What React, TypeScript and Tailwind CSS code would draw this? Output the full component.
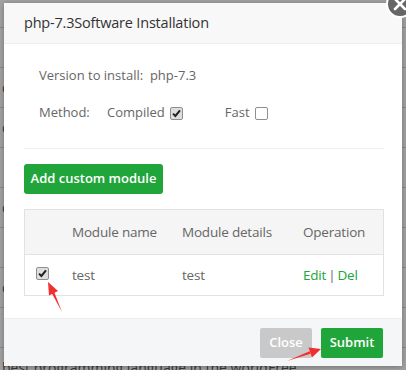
import { ReactNode } from "react";

const bgRows = [
  { left: "", right: "Free" },
  { left: "", right: "" },
  { left: "o", right: "" },
  { left: "o", right: "" },
  { left: "", right: "" },
  { left: "o", right: "" },
  { left: "", right: "" },
  { left: "o", right: "" },
  { left: "", right: "" },
  { left: "best programming language in the world", right: "Free" },
];

const columns = ["Module name", "Module details", "Operation"];

export default function App() {
  return (
    <div className="relative h-[370px] w-[406px] overflow-hidden bg-[#a3a3a3] font-['Open_Sans',sans-serif]">
      {/* dimmed page under the layer */}
      <div className="-mt-[12px] flex flex-col">
        {bgRows.map((row, i) => (
          <div
            key={i}
            className="flex h-[40px] items-center border-b border-[#8c8c8c] text-[14px] text-[#3a3a3a]"
          >
            <span className="w-[268px] whitespace-nowrap pl-[2px]">{row.left}</span>
            <span>{row.right}</span>
          </div>
        ))}
      </div>

      <div className="absolute left-[4px] top-[3px] flex h-[363px] w-[398px] flex-col bg-white shadow-[0_1px_6px_rgba(0,0,0,0.3)]">
        <div className="flex h-[41px] shrink-0 items-center border-b border-[#eee] bg-[#f8f8f8] pl-[20px] text-[14.5px] tracking-[-0.2px] text-[#333]">
          php-7.3Software Installation
        </div>

        <div className="flex flex-col pl-[20px] pr-[18px] text-[13px] text-[#666]">
          <div className="mt-[22px] flex h-[20px] items-center pl-[15px]">
            Version to install:&nbsp;&nbsp;php-7.3
          </div>
          <div className="mt-[17px] flex h-[20px] items-center pl-[15px]">
            <span className="w-[68px]">Method:</span>
            <span>Compiled</span>
            <Check checked className="ml-[5px]" />
            <span className="ml-[42px]">Fast</span>
            <Check className="ml-[5px]" />
          </div>
          <div className="mt-[25px] h-px bg-[#eee]" />

          <button className="mt-[15px] h-[30px] w-[139px] rounded-[3px] bg-[#20a53a] text-[13px] font-semibold text-white">
            Add custom module
          </button>

          <div className="mt-[15px] border border-[#e2e2e2] text-[13.5px] tracking-[-0.2px]">
            <Row className="h-[45px] border-b border-[#e2e2e2] bg-[#f5f5f5]">
              <span />
              {columns.map((c) => (
                <span key={c}>{c}</span>
              ))}
            </Row>
            <Row className="h-[40px]">
              <span className="pl-[11px] pb-[4px]">
                <Check checked />
              </span>
              <span>test</span>
              <span>test</span>
              <span>
                <a className="text-[#20a53a]">Edit</a>
                <span className="text-[#666]">&thinsp;|&thinsp;</span>
                <a className="text-[#20a53a]">Del</a>
              </span>
            </Row>
          </div>
        </div>

        <div className="mt-auto flex h-[48px] items-center justify-end gap-[9px] border-t border-[#eee] bg-[#f5f6f7] pr-[19px]">
          <button className="h-[30px] w-[52px] rounded-[2px] bg-[#c9c9c9] text-[13px] font-semibold text-white">
            Close
          </button>
          <button className="h-[30px] w-[62px] rounded-[2px] bg-[#20a53a] text-[13px] font-semibold text-white">
            Submit
          </button>
        </div>
      </div>

      {/* layer close button */}
      <svg className="absolute left-[385px] top-[-11px]" width="30" height="30" viewBox="0 0 30 30">
        <circle cx="15" cy="15" r="13" fill="#666" stroke="#fff" strokeWidth="2" />
        <path d="M10 10 L20 20 M20 10 L10 20" stroke="#fff" strokeWidth="2.6" strokeLinecap="round" />
      </svg>

      {/* red annotation arrows */}
      <svg className="absolute left-0 top-0" width="406" height="370" viewBox="0 0 406 370">
        <polygon points="62,312 54.2,292 51.8,293.2" fill="#f03030" />
        <polygon points="48,282 58,291 49,295.5" fill="#f03030" />
        <polygon points="287,361 309.5,351.2 310.5,353.8" fill="#f03030" />
        <polygon points="321,349 312,357.5 308.5,347.5" fill="#f03030" />
      </svg>
    </div>
  );
}

function Row({ children, className }: { children: ReactNode; className: string }) {
  return (
    <div className={`grid grid-cols-[47px_110px_121px_1fr] items-center text-[#666] ${className}`}>
      {children}
    </div>
  );
}

function Check({ checked, className = "" }: { checked?: boolean; className?: string }) {
  return (
    <span
      className={`inline-flex h-[13px] w-[13px] items-center justify-center rounded-[2px] border border-[#8f8f8f] ${
        checked ? "bg-[#dedede]" : "bg-white"
      } ${className}`}
    >
      {checked && (
        <svg width="9" height="9" viewBox="0 0 9 9">
          <path d="M1 4.6 L3.4 7 L8 1.4" fill="none" stroke="#222" strokeWidth="2" />
        </svg>
      )}
    </span>
  );
}
